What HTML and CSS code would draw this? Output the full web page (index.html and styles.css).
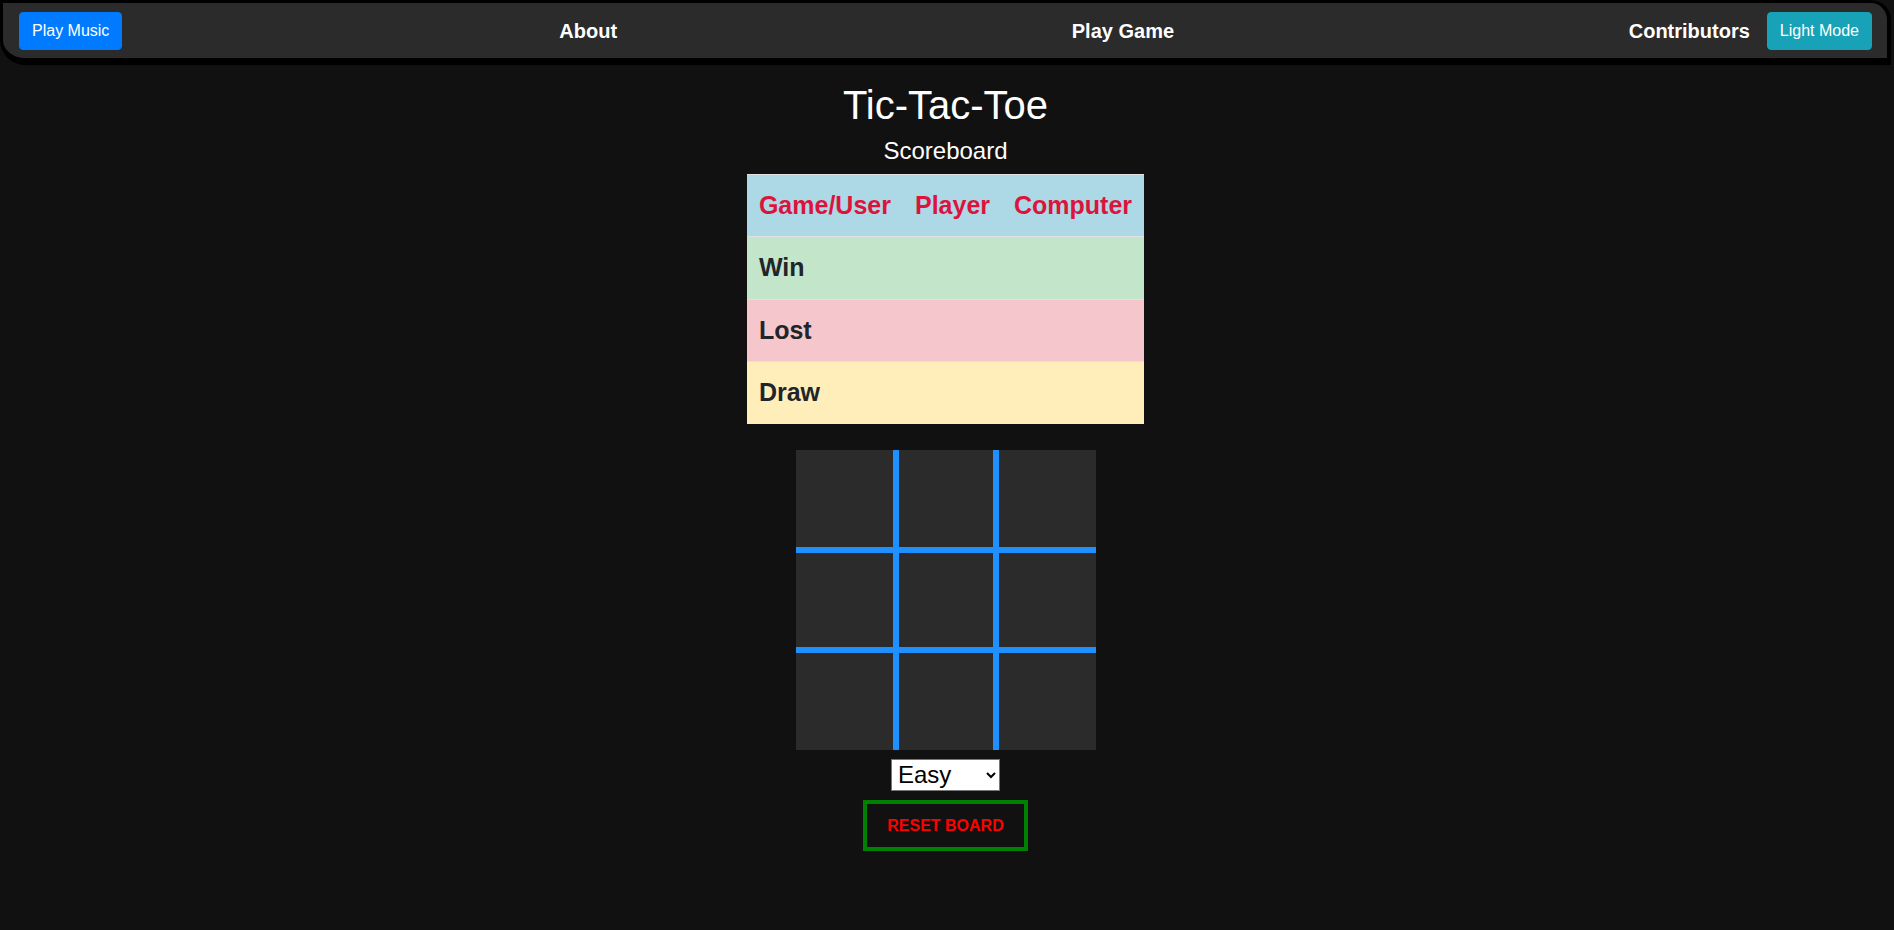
FILE: index.html
```html
<!DOCTYPE html>
<html lang="en">
<head>
<meta charset="utf-8">
<title>Tic-Tac-Toe</title>
<link rel="stylesheet" href="styles.css">
</head>
<body>
<nav class="navbar">
  <button class="btn btn-primary">Play Music</button>
  <div class="nav-links">
    <a class="nav-link" href="#">About</a>
    <a class="nav-link" href="#">Play Game</a>
    <a class="nav-link" href="#">Contributors</a>
  </div>
  <button class="btn btn-info">Light Mode</button>
</nav>
<main class="main">
  <h1 class="title">Tic-Tac-Toe</h1>
  <h4 class="subtitle">Scoreboard</h4>
  <table class="score">
    <thead>
      <tr class="row-head"><th>Game/User</th><th>Player</th><th>Computer</th></tr>
    </thead>
    <tbody>
      <tr class="row-win"><td>Win</td><td></td><td></td></tr>
      <tr class="row-lost"><td>Lost</td><td></td><td></td></tr>
      <tr class="row-draw"><td>Draw</td><td></td><td></td></tr>
    </tbody>
  </table>
  <div class="board">
    <div class="cell c-top c-left"></div>
    <div class="cell c-top"></div>
    <div class="cell c-top c-right"></div>
    <div class="cell c-left"></div>
    <div class="cell"></div>
    <div class="cell c-right"></div>
    <div class="cell c-bottom c-left"></div>
    <div class="cell c-bottom"></div>
    <div class="cell c-bottom c-right"></div>
  </div>
  <select class="level">
    <option>Easy</option>
    <option>Medium</option>
    <option>Hard</option>
  </select>
  <button class="reset">RESET BOARD</button>
</main>
</body>
</html>
```
FILE: styles.css
```css
* { box-sizing: border-box; }
html, body { margin: 0; padding: 0; }
body {
  background: #111111;
  color: #ffffff;
  font-family: "Liberation Sans", Arial, sans-serif;
  font-size: 16px;
  line-height: 1.5;
  width: 1894px;
  height: 930px;
  overflow: hidden;
}
.navbar {
  display: flex;
  align-items: center;
  width: 1891px;
  height: 65px;
  background: #2b2b2b;
  border-style: solid;
  border-color: #000;
  border-width: 3px 4px 7px 3px;
  border-radius: 0 20px 0 25px;
  padding: 0 15px 0 16px;
}
.btn {
  font-family: "Liberation Sans", Arial, sans-serif;
  font-size: 16px;
  line-height: 24px;
  padding: 6px 12px;
  height: 38px;
  border: 1px solid transparent;
  border-radius: 4px;
  color: #fff;
  cursor: pointer;
}
.btn-primary { background: #007bff; border-color: #007bff; }
.btn-info { background: #17a2b8; border-color: #17a2b8; }
.nav-links {
  flex: 1;
  display: flex;
  justify-content: space-between;
  align-items: center;
  margin: 0 17px 0 437px;
}
.nav-link {
  color: #fff;
  font-weight: bold;
  font-size: 20px;
  text-decoration: none;
  line-height: 24px;
}
.main {
  display: flex;
  flex-direction: column;
  align-items: center;
  padding-right: 3px;
}
.title {
  margin: 16px 0 8px;
  font-size: 40px;
  font-weight: 500;
  line-height: 1.2;
}
.subtitle {
  margin: 0 0 8px;
  font-size: 24px;
  font-weight: 500;
  line-height: 1.2;
}
.score {
  border-collapse: collapse;
  font-size: 25px;
  line-height: 1.5;
}
.score th, .score td {
  padding: 12px;
  border-top: 1px solid #dee2e6;
  text-align: left;
  font-weight: bold;
  color: #212529;
  white-space: nowrap;
}
.row-head { background: #add8e6; }
.row-head th { color: #dc143c; }
.row-win { background: #c3e6cb; }
.row-lost { background: #f5c6cb; }
.row-draw { background: #ffeeba; }
.board {
  margin-top: 26px;
  display: grid;
  grid-template-columns: repeat(3, 100px);
  grid-template-rows: repeat(3, 100px);
}
.cell {
  background: #2b2b2b;
  border: 3px solid #1e90ff;
}
.c-top { border-top: none; }
.c-bottom { border-bottom: none; }
.c-left { border-left: none; }
.c-right { border-right: none; }
.level {
  margin-top: 9px;
  width: 109px;
  height: 32px;
  font-family: "Liberation Sans", Arial, sans-serif;
  font-size: 24px;
  color: #000;
  background: #fff;
  border: 1px solid #767676;
  border-radius: 0;
  padding: 0 0 0 2px;
}
.reset {
  margin-top: 9px;
  width: 165px;
  height: 51px;
  background: transparent;
  border: 4px solid #008000;
  color: #ff0000;
  font-family: "Liberation Sans", Arial, sans-serif;
  font-weight: bold;
  font-size: 16px;
  line-height: 19px;
  padding: 0;
}
```
